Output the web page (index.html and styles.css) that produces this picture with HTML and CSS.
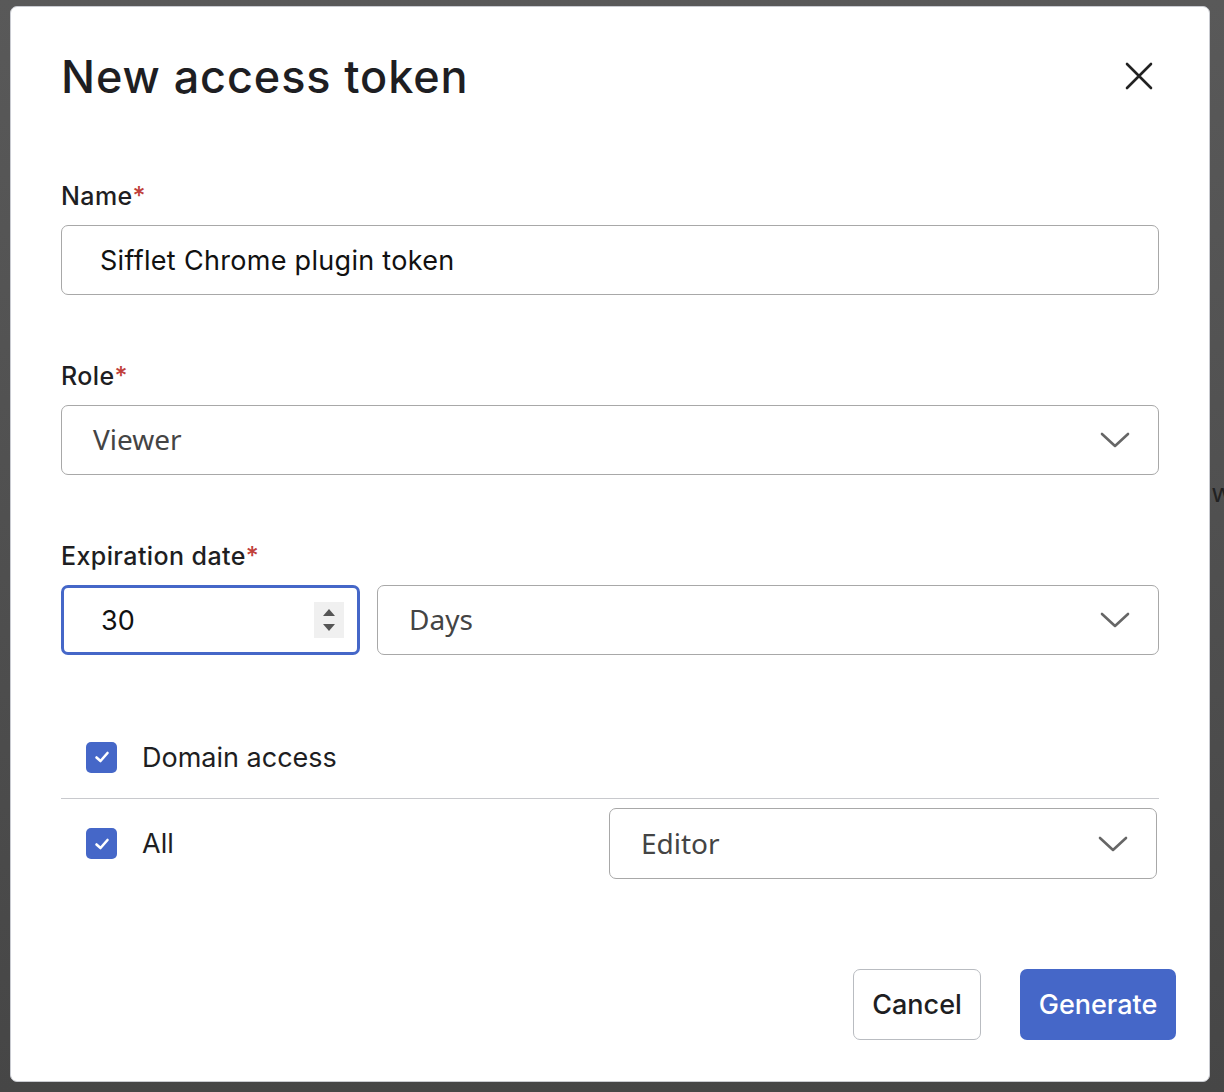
FILE: index.html
```html
<!DOCTYPE html>
<html lang="en">

<head>
    <meta charset="UTF-8">
    <meta name="viewport" content="width=device-width, initial-scale=1.0">
    <title>New access token</title>
    <link rel="stylesheet" href="styles.css">
</head>

<body>
    <!-- page content peeking out behind the overlay -->
    <span class="behind-text">w</span>

    <div class="modal">
        <div class="modal-header">
            <h1>New access token</h1>
            <button class="close-btn" aria-label="Close">
                <svg width="28" height="28" viewBox="0 0 28 28">
                    <path d="M2 2 L26 26 M26 2 L2 26" stroke="#222" stroke-width="2.6" stroke-linecap="round" fill="none" />
                </svg>
            </button>
        </div>

        <div class="field">
            <label class="field-label" for="nameInput">Name<span class="required">*</span></label>
            <input type="text" id="nameInput" class="text-input" value="Sifflet Chrome plugin token">
        </div>

        <div class="field">
            <span class="field-label">Role<span class="required">*</span></span>
            <div class="select">
                <span class="select-value">Viewer</span>
                <svg class="chevron" width="30" height="16" viewBox="0 0 30 16">
                    <path d="M2 2 L15 14 L28 2" stroke="#666" stroke-width="2.6" stroke-linecap="round" stroke-linejoin="round" fill="none" />
                </svg>
            </div>
        </div>

        <div class="field">
            <span class="field-label">Expiration date<span class="required">*</span></span>
            <div class="expiration-row">
                <div class="number-input">
                    <input type="text" value="30">
                    <span class="stepper">
                        <svg width="14" height="28" viewBox="0 0 14 28">
                            <path d="M7 3 L13 10 L1 10 Z" fill="#555" />
                            <path d="M1 18 L13 18 L7 25 Z" fill="#555" />
                        </svg>
                    </span>
                </div>
                <div class="select days-select">
                    <span class="select-value">Days</span>
                    <svg class="chevron" width="30" height="16" viewBox="0 0 30 16">
                        <path d="M2 2 L15 14 L28 2" stroke="#666" stroke-width="2.6" stroke-linecap="round" stroke-linejoin="round" fill="none" />
                    </svg>
                </div>
            </div>
        </div>

        <div class="domain-section">
            <div class="check-row domain-head">
                <span class="checkbox">
                    <svg width="18" height="18" viewBox="0 0 18 18">
                        <path d="M3.5 9.5 L7.5 13 L14.5 5" stroke="#fff" stroke-width="2.6" stroke-linecap="round" stroke-linejoin="round" fill="none" />
                    </svg>
                </span>
                <span class="check-label">Domain access</span>
            </div>
            <div class="domain-row">
                <div class="check-row">
                    <span class="checkbox">
                        <svg width="18" height="18" viewBox="0 0 18 18">
                            <path d="M3.5 9.5 L7.5 13 L14.5 5" stroke="#fff" stroke-width="2.6" stroke-linecap="round" stroke-linejoin="round" fill="none" />
                        </svg>
                    </span>
                    <span class="check-label">All</span>
                </div>
                <div class="select domain-select">
                    <span class="select-value">Editor</span>
                    <svg class="chevron" width="30" height="16" viewBox="0 0 30 16">
                        <path d="M2 2 L15 14 L28 2" stroke="#666" stroke-width="2.6" stroke-linecap="round" stroke-linejoin="round" fill="none" />
                    </svg>
                </div>
            </div>
        </div>

        <div class="modal-footer">
            <button class="btn btn-cancel">Cancel</button>
            <button class="btn btn-primary">Generate</button>
        </div>
    </div>
</body>

</html>
```

FILE: styles.css
```css
:root {
    --primary: #4567c8;
    --border: #a8a8a8;
    --text: #1e1e22;
    --radius: 7px;
}

html,
body {
    height: 100%;
}

body {
    margin: 0;
    font-family: Inter, 'Noto Sans', sans-serif;
    color: var(--text);
    background: linear-gradient(#595959, #464646);
    overflow: hidden;
}

.behind-text {
    position: absolute;
    left: 1212px;
    top: 474px;
    font-size: 26px;
    color: #222;
    font-family: 'Noto Sans', sans-serif;
}

.modal {
    position: relative;
    width: 1200px;
    height: 1076px;
    margin: 6px 0 0 10px;
    padding: 0 50px;
    box-sizing: border-box;
    background-color: #fff;
    border: 1px solid #c9cbd1;
    border-radius: 7px;
    display: flex;
    flex-direction: column;
}

.modal-header {
    height: 138px;
    display: flex;
    align-items: center;
    justify-content: space-between;
}

h1 {
    margin: 0;
    font-size: 45px;
    font-weight: 500;
    letter-spacing: 0.9px;
}

.close-btn {
    background: none;
    border: none;
    padding: 0;
    margin-right: 6px;
    cursor: pointer;
    display: flex;
}

.field {
    display: flex;
    flex-direction: column;
    margin-top: 36px;
}

.field + .field {
    margin-top: 66px;
}

.field-label {
    font-size: 25px;
    font-weight: 500;
    line-height: 30px;
    letter-spacing: 0.4px;
    margin-bottom: 14px;
}

.required {
    color: #c0403a;
}

.text-input {
    height: 70px;
    box-sizing: border-box;
    border: 1.5px solid var(--border);
    border-radius: var(--radius);
    padding: 0 38px;
    font-family: Inter, sans-serif;
    font-size: 27px;
    letter-spacing: 0.3px;
    color: #111;
    outline: none;
}

.select {
    height: 70px;
    box-sizing: border-box;
    border: 1.5px solid var(--border);
    border-radius: var(--radius);
    padding: 0 28px 0 31px;
    display: flex;
    align-items: center;
    justify-content: space-between;
}

.select-value {
    font-family: 'Noto Sans', sans-serif;
    font-size: 28px;
    color: #444;
    margin-top: -2px;
}

.expiration-row {
    display: flex;
    gap: 17px;
}

.number-input {
    width: 299px;
    height: 70px;
    box-sizing: border-box;
    border: 3px solid var(--primary);
    border-radius: var(--radius);
    display: flex;
    align-items: center;
    padding: 0 13px 0 37px;
}

.number-input input {
    flex: 1;
    min-width: 0;
    border: none;
    outline: none;
    padding: 0;
    font-family: Inter, sans-serif;
    font-size: 27px;
    color: #111;
}

.stepper {
    width: 30px;
    height: 36px;
    background-color: #f0f0f0;
    display: flex;
    align-items: center;
    justify-content: center;
}

.days-select {
    flex: 1;
}

.domain-section {
    margin-top: 82px;
}

.check-row {
    display: flex;
    align-items: center;
    padding-left: 25px;
}

.domain-head {
    height: 40px;
    padding-bottom: 21px;
    border-bottom: 1.5px solid #c8c9cd;
}

.checkbox {
    width: 31px;
    height: 31px;
    border-radius: 5px;
    background-color: var(--primary);
    display: flex;
    align-items: center;
    justify-content: center;
    margin-right: 25px;
}

.check-label {
    font-size: 27px;
    color: var(--text);
}

.domain-row {
    display: flex;
    align-items: center;
    justify-content: space-between;
    margin-top: 9px;
}

.domain-select {
    width: 548px;
    height: 71px;
    margin-right: 2px;
}

.modal-footer {
    display: flex;
    justify-content: flex-end;
    gap: 39px;
    margin-top: auto;
    margin-bottom: 41px;
    margin-right: -17px;
}

.btn {
    height: 71px;
    border-radius: var(--radius);
    font-family: Inter, sans-serif;
    font-size: 27px;
    font-weight: 500;
    cursor: pointer;
}

.btn-cancel {
    width: 128px;
    background-color: #fff;
    border: 1.5px solid #b9bcc1;
    color: var(--text);
}

.btn-primary {
    width: 156px;
    background-color: var(--primary);
    border: none;
    color: #fff;
}
```
